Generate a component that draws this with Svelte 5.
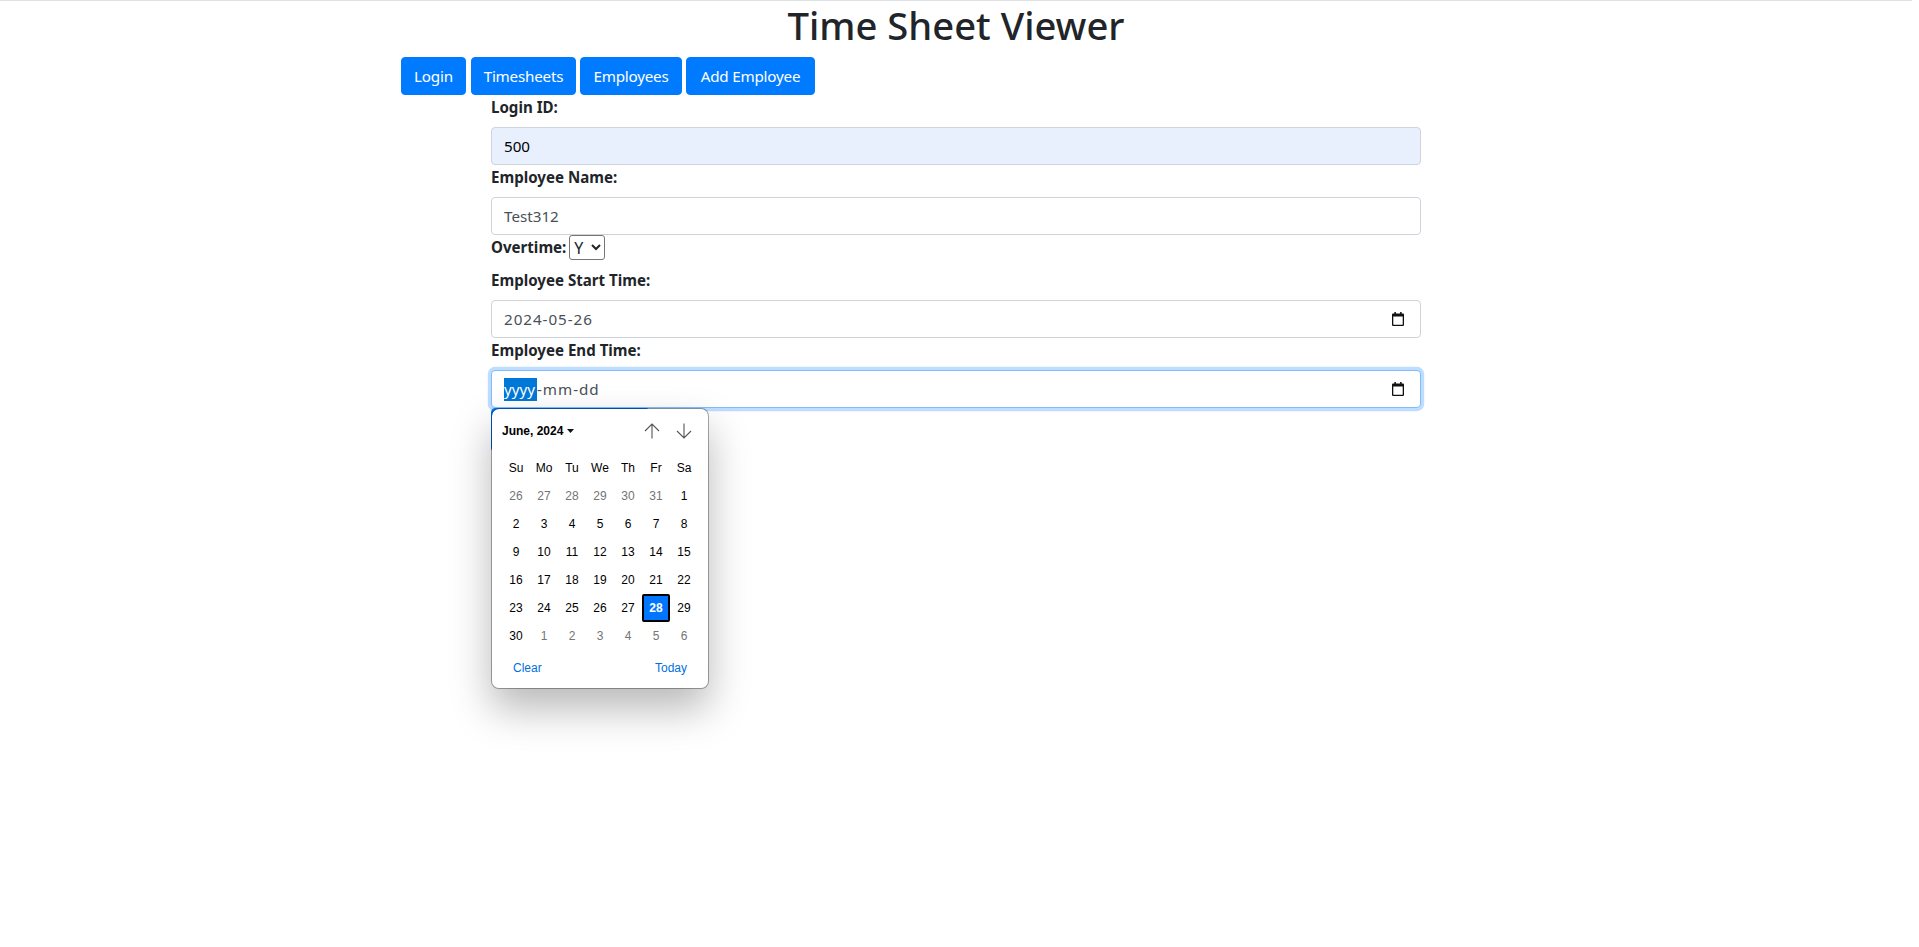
<script>
  const navItems = [
    { label: 'Login', cls: 'w-login' },
    { label: 'Timesheets', cls: 'w-times' },
    { label: 'Employees', cls: 'w-emps' },
    { label: 'Add Employee', cls: 'w-add' }
  ];
  const dayNames = ['Su', 'Mo', 'Tu', 'We', 'Th', 'Fr', 'Sa'];
  const prev = [26, 27, 28, 29, 30, 31];
  const june = Array.from({ length: 30 }, (_, i) => i + 1);
  const next = [1, 2, 3, 4, 5, 6];
  const cells = [
    ...prev.map((d) => ({ d, out: true })),
    ...june.map((d) => ({ d, out: false })),
    ...next.map((d) => ({ d, out: true }))
  ];
</script>

<div class="page">
  <div class="container">
    <h1>Time Sheet Viewer</h1>
    <nav class="nav">
      {#each navItems as item}
        <button class="btn {item.cls}" type="button">{item.label}</button>
      {/each}
    </nav>
    <form class="form">
      <label class="lbl" for="id">Login ID:</label>
      <input id="id" class="ctl auto" value="500" />
      <label class="lbl" for="name">Employee Name:</label>
      <input id="name" class="ctl" value="Test312" />
      <div class="ot">
        <label class="lbl inline" for="ot">Overtime:</label>
        <select id="ot" class="sel"><option>Y</option><option>N</option></select>
      </div>
      <div class="lbl">Employee Start Time:</div>
      <div class="ctl date">
        <span class="seg">2024-05-26</span>
        {@render cal()}
      </div>
      <div class="lbl">Employee End Time:</div>
      <div class="field-wrap">
        <div class="ctl date focus">
          <span class="seg"><span class="hl">yyyy</span>-mm-dd</span>
          {@render cal()}
        </div>
        <button class="btn submit" type="button"></button>
        <div class="popup">
          <div class="head">
            <span class="month">June, 2024<svg class="caret" width="7" height="4" viewBox="0 0 7 4"><path d="M0 0h7L3.5 4z" fill="#111" /></svg></span>
            <span class="arrows">
              <svg width="16" height="16" viewBox="0 0 16 16"><path d="M8 15.5V1M1 8l7-7 7 7" fill="none" stroke="#555" stroke-width="1.1" /></svg>
              <svg width="16" height="16" viewBox="0 0 16 16"><path d="M8 .5V15M1 8l7 7 7-7" fill="none" stroke="#555" stroke-width="1.1" /></svg>
            </span>
          </div>
          <div class="grid">
            {#each dayNames as n}<div class="dn">{n}</div>{/each}
            {#each cells as c}
              <div class="day" class:out={c.out} class:sel-day={!c.out && c.d === 28}>{c.d}</div>
            {/each}
          </div>
          <div class="foot"><span>Clear</span><span>Today</span></div>
        </div>
      </div>
    </form>
  </div>
</div>

{#snippet cal()}
  <svg class="cal" width="12" height="14" viewBox="0 0 12 14"><path d="M1 1.5h10a1 1 0 0 1 1 1v10.5a1 1 0 0 1-1 1H1a1 1 0 0 1-1-1V2.5a1 1 0 0 1 1-1z M1.3 4.6v8.1h9.4V4.6z" fill="#111" fill-rule="evenodd" /><path d="M2.4 0h1.5v3H2.4zM8.1 0h1.5v3H8.1z" fill="#111" /></svg>
{/snippet}

<style>
  :global(body) { margin: 0; background: #fff; }
  .page {
    width: 1912px;
    border-top: 1px solid #dee2e6;
    font-family: "Noto Sans", "Open Sans", sans-serif;
    font-size: 16px;
    line-height: 24px;
    color: #212529;
    height: 946px;
    overflow: hidden;
  }
  .container { width: 1110px; margin: 0 auto; }
  h1 {
    margin: 0 0 8px;
    font-size: 38.2px;
    line-height: 48px;
    font-weight: 500;
    text-align: center;
  }
  .nav { display: flex; }
  .btn {
    height: 38px;
    padding: 0;
    border: 1px solid #007bff;
    border-radius: 4px;
    background: #007bff;
    color: #fff;
    font: inherit;
    font-size: 15.2px;
    letter-spacing: -.2px;
    white-space: nowrap;
  }
  .w-login { width: 65px; margin-right: 5px; }
  .w-times { width: 105px; margin-right: 4px; }
  .w-emps { width: 102px; margin-right: 4px; }
  .w-add { width: 129px; }
  .form { width: 930px; margin: 0 auto; }
  .lbl {
    display: block;
    margin-bottom: 8px;
    font-weight: 700;
    font-size: 15.1px;
  }
  .lbl.inline { display: inline-block; }
  .ctl {
    display: flex;
    align-items: center;
    box-sizing: border-box;
    width: 100%;
    height: 38px;
    padding: 6px 12px;
    border: 1px solid #ced4da;
    border-radius: 4px;
    background: #fff;
    color: #495057;
    font: inherit;
    font-size: 15.2px;
  }
  .auto { background: #e8f0fe; color: #000; }
  .ot { height: 33px; display: flex; align-items: flex-start; gap: 3px; }
  .ot .lbl { margin: 0; }
  .sel {
    width: 36px;
    height: 25px;
    margin: 0;
    padding: 0;
    font: inherit;
    font-size: 16px;
    background: #fff;
    color: #212529;
    border: 1px solid #767676;
    border-radius: 3px;
  }
  .date { justify-content: space-between; padding-right: 16px; }
  .seg { letter-spacing: .95px; white-space: pre; }
  .hl { background: #0078d7; color: #fff; display: inline-block; letter-spacing: 0; width: 33px; line-height: 23px; }
  .cal { display: block; }
  .focus { border-color: #80bdff; box-shadow: 0 0 0 3.2px rgba(0, 123, 255, .25); }
  .field-wrap { position: relative; }
  .submit { position: absolute; left: 0; top: 38px; width: 159px; height: 44px; }
  .popup {
    position: absolute;
    left: 0;
    top: 38px;
    box-sizing: border-box;
    width: 218px;
    height: 281px;
    background: #fff;
    background-clip: padding-box;
    border: 1px solid rgba(0, 0, 0, .33);
    border-radius: 8px;
    box-shadow: 0 20px 40px rgba(0, 0, 0, .28);
    font-family: "Liberation Sans", Arial, sans-serif;
    font-size: 12px;
    line-height: 14px;
    color: #000;
  }
  .head {
    display: flex;
    justify-content: space-between;
    align-items: center;
    box-sizing: border-box;
    height: 45px;
    padding: 0 16px 1px 10px;
  }
  .month { font-weight: 700; display: flex; align-items: center; gap: 4px; }
  .arrows { display: flex; gap: 16px; }
  .arrows svg { display: block; }
  .grid {
    display: grid;
    grid-template-columns: repeat(7, 28px);
    grid-auto-rows: 28px;
    justify-content: center;
  }
  .dn, .day { display: flex; align-items: center; justify-content: center; }
  .out { color: #757575; }
  .sel-day {
    background: #0075ff;
    color: #fff;
    font-weight: 700;
    border: 2px solid #000;
    border-radius: 2px;
    box-sizing: border-box;
  }
  .foot {
    display: flex;
    justify-content: space-between;
    padding: 11px 21px 0 21px;
    color: #0070e0;
  }
</style>
